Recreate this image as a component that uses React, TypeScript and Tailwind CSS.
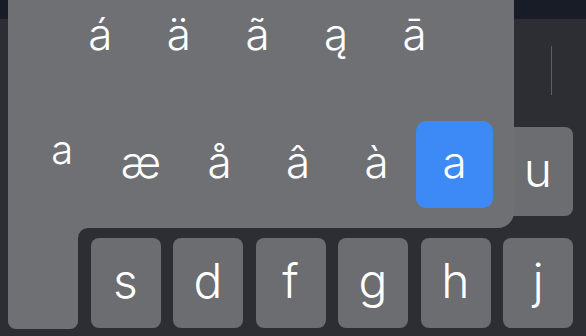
import React from "react";

// labels hidden under the popup or past the edge are left blank
const row1 = ["", "", "", "", "", "", "u", ""];
const row2 = ["", "s", "d", "f", "g", "h", "j", ""];

const topAccents = ["á", "ä", "ã", "ą", "ā"];
const bottomAccents = ["æ", "å", "â", "à"];

const Key = ({ label }: { label: string }) => (
  <div className="w-[70px] h-full shrink-0 rounded-[8px] bg-[#6b6d70] flex items-center justify-center pb-[4px] text-[48px] font-light text-white leading-none">
    {label}
  </div>
);

const App = () => {
  return (
    <div
      className="relative w-[586px] h-[336px] overflow-hidden bg-[#2c2e33]"
      style={{ fontFamily: "Inter, 'Noto Sans', sans-serif" }}
    >
      {/* app area above keyboard */}
      <div className="h-[19px] bg-[#171c27]" />

      {/* suggestion bar */}
      <div className="h-[108px] flex justify-end">
        <div className="mt-[27px] mr-[34px] w-px h-[49px] bg-[#5c5e62]" />
      </div>

      {/* key rows */}
      <div className="flex flex-col gap-[22px] pl-[8px]">
        <div className="flex gap-[12.5px] h-[89px]">
          {row1.map((k, i) => (
            <Key key={i} label={k} />
          ))}
        </div>
        <div className="flex gap-[12.5px] h-[90px]">
          {row2.map((k, i) => (
            <Key key={i} label={k} />
          ))}
        </div>
      </div>

      {/* accent popup */}
      <div className="absolute left-[8px] top-0 w-[506px] flex flex-col">
        <div className="h-[228px] bg-[#6e7073] rounded-br-[16px] flex flex-col text-white font-light leading-none">
          <div className="flex h-[87px] mt-[-7px] pl-[53px]">
            {topAccents.map((c) => (
              <div key={c} className="w-[78.6px] flex items-center justify-center pb-[6px] text-[44px]">
                {c}
              </div>
            ))}
          </div>
          <div className="flex h-[87px] mt-[41px] pl-[15px]">
            <div className="w-[78.6px] flex items-center justify-center pb-[30px] text-[40px]">a</div>
            {bottomAccents.map((c) => (
              <div key={c} className="w-[78.6px] flex items-center justify-center pb-[6px] text-[44px]">
                {c}
              </div>
            ))}
            <div className="w-[77px] rounded-[10px] bg-[#3d8af7] flex items-center justify-center pb-[6px] text-[44px]">
              a
            </div>
          </div>
        </div>
        <div className="flex">
          <div className="w-[70px] h-[101px] bg-[#6e7073] rounded-b-[8px]" />
          <div className="w-[12px] h-[10px] bg-[#6e7073]">
            <div className="w-full h-full bg-[#2c2e33] rounded-tl-[10px]" />
          </div>
        </div>
      </div>
    </div>
  );
};

export default App;
